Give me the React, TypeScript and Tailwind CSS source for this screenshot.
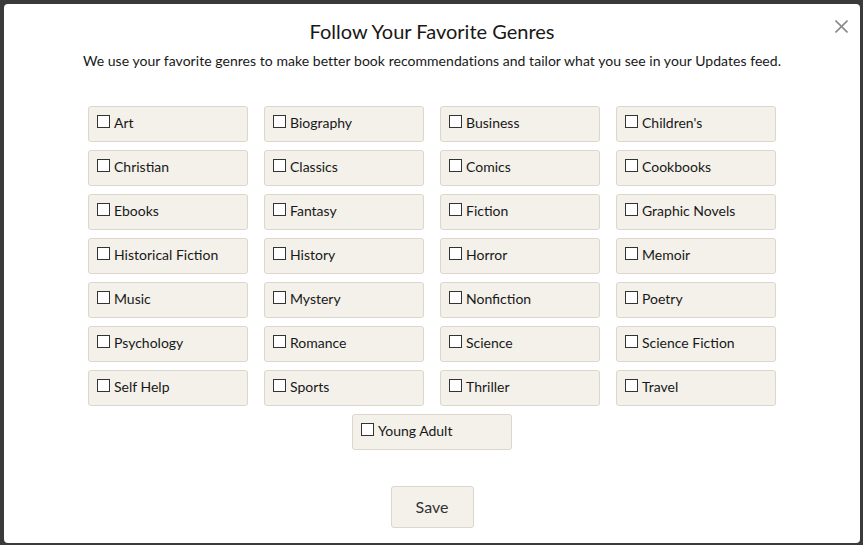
import React from "react";

const genres = [
  "Art", "Biography", "Business", "Children's",
  "Christian", "Classics", "Comics", "Cookbooks",
  "Ebooks", "Fantasy", "Fiction", "Graphic Novels",
  "Historical Fiction", "History", "Horror", "Memoir",
  "Music", "Mystery", "Nonfiction", "Poetry",
  "Psychology", "Romance", "Science", "Science Fiction",
  "Self Help", "Sports", "Thriller", "Travel",
  "Young Adult",
];

export default function App() {
  return (
    <div
      className="w-[863px] h-[545px] bg-[#3a3a3a] pt-[4px] pl-[4px] pr-[3px] pb-[2px]"
      style={{ fontFamily: "Lato, 'Noto Sans', sans-serif" }}
    >
      <div className="relative w-full h-full bg-white rounded-[4px] flex flex-col items-center text-[#181818]">
        <button className="absolute right-[10px] top-[13px] w-[18px] h-[18px] flex items-center justify-center">
          <svg width="13" height="13" viewBox="0 0 13 13">
            <path d="M0.5 0.5 L12.5 12.5 M12.5 0.5 L0.5 12.5" stroke="#8a8a8a" strokeWidth="1.6" />
          </svg>
        </button>
        <h1 className="mt-[15px] text-[20px] leading-[24px] text-[#181818]">Follow Your Favorite Genres</h1>
        <p className="mt-[9px] text-[14px] leading-[18px] text-[#181818] tracking-[0.003em]">
          We use your favorite genres to make better book recommendations and tailor what you see in your Updates feed.
        </p>
        <div className="mt-[36px] w-[688px] flex flex-wrap justify-center gap-x-[16px] gap-y-[8px]">
          {genres.map((g) => (
            <label
              key={g}
              className="w-[160px] h-[36px] bg-[#f4f1ea] border border-[#dcd6cc] rounded-[3px] flex items-start pl-[8px] pt-[7px] text-[14px] leading-[18px] text-[#181818]"
            >
              <span className="mt-[1px] w-[13px] h-[13px] border border-[#333] bg-white mr-[4px] shrink-0" />
              <span>{g}</span>
            </label>
          ))}
        </div>
        <button className="mt-[36px] w-[83px] h-[42px] bg-[#f4f1ea] border border-[#dcd6cc] rounded-[3px] text-[16px] leading-[20px] text-[#333]">
          Save
        </button>
      </div>
    </div>
  );
}
